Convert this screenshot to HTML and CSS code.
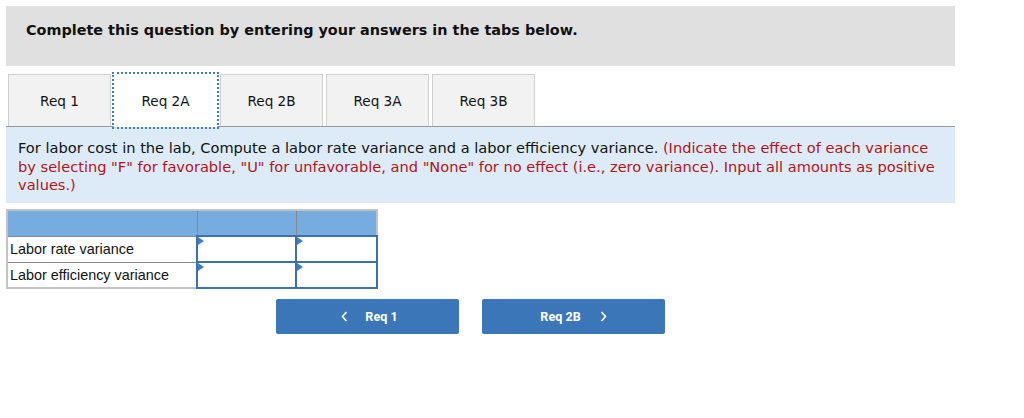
FILE: index.html
```html
<!DOCTYPE html>
<html>
<head>
<meta charset="utf-8">
<link rel="stylesheet" href="styles.css">
</head>
<body>
<div class="page">
  <div class="banner">Complete this question by entering your answers in the tabs below.</div>
  <div class="tabs">
    <div class="tab">Req 1</div>
    <div class="tab active">Req 2A</div>
    <div class="tab">Req 2B</div>
    <div class="tab">Req 3A</div>
    <div class="tab">Req 3B</div>
  </div>
  <div class="info">For labor cost in the lab, Compute a labor rate variance and a labor efficiency variance. <span class="red">(Indicate the effect of each variance by selecting "F" for favorable, "U" for unfavorable, and "None" for no effect (i.e., zero variance). Input all amounts as positive values.)</span></div>
  <table class="grid">
    <tr class="head"><td class="c1"></td><td class="c2"></td><td class="c3"></td></tr>
    <tr><td class="c1 label">Labor rate variance</td><td class="c2 input"><span class="flag"></span></td><td class="c3 input"><span class="flag"></span></td></tr>
    <tr><td class="c1 label">Labor efficiency variance</td><td class="c2 input"><span class="flag"></span></td><td class="c3 input"><span class="flag"></span></td></tr>
  </table>
  <div class="nav">
    <div class="btn prev"><svg class="chev" width="7" height="11" viewBox="0 0 7 11"><path d="M5.5 1 L1.5 5.5 L5.5 10" fill="none" stroke="#fff" stroke-width="1.6"/></svg><span>Req 1</span></div>
    <div class="btn next"><span>Req 2B</span><svg class="chev" width="7" height="11" viewBox="0 0 7 11"><path d="M1.5 1 L5.5 5.5 L1.5 10" fill="none" stroke="#fff" stroke-width="1.6"/></svg></div>
  </div>
</div>
</body>
</html>
```
FILE: styles.css
```css
html, body { margin: 0; padding: 0; background: #fff; }
body { font-family: "DejaVu Sans", Verdana, sans-serif; color: #111; }
.page { padding: 6px 69px 0 6px; }
.banner {
  background: #e0e0e0;
  height: 60px;
  box-sizing: border-box;
  padding: 16px 0 0 20px;
  font-size: 14.4px;
  font-weight: bold;
}
.tabs {
  display: flex;
  gap: 3px;
  margin-top: 8px;
  padding-left: 2px;
  border-bottom: 1px solid #999;
  height: 52px;
}
.tab {
  width: 103px;
  box-sizing: border-box;
  height: 52px;
  background: #f2f2f2;
  border: 1px solid #cfcfcf;
  border-bottom: none;
  display: flex;
  align-items: center;
  justify-content: center;
  font-size: 13.6px;
  color: #111;
}
.tab.active {
  background: #fff;
  border: none;
  outline: 2px dotted #3f7cc4;
  outline-offset: 0px;
  position: relative;
  z-index: 1;
  height: 53px;
}
.info {
  background: #dcebf7;
  padding: 12px 12px 10px 12px;
  font-size: 14.6px;
  line-height: 18.5px;
  height: 76px;
  box-sizing: border-box;
}
.red { color: #b0141a; }
.grid {
  margin-top: 6px;
  border-collapse: collapse;
  border: 2px solid #c3c3c3;
  font-family: "Liberation Sans", Arial, sans-serif;
  font-size: 14.4px;
}
.grid td { padding: 0; height: 24px; border: 1px solid #888; }
.grid .c1 { width: 186px; }
.grid .c2 { width: 97px; }
.grid .c3 { width: 79px; }
.grid .head td { background: #77ace0; height: 24px; }
.grid .label { padding-left: 2px; }
.grid .input { border: 2px solid #3d70b0; position: relative; background: #fff; }
.flag {
  position: absolute; left: 0; top: 0;
  width: 0; height: 0;
  border-top: 4px solid transparent;
  border-bottom: 4px solid transparent;
  border-left: 6px solid #3d7cc9;
}
.nav {
  display: flex;
  gap: 23px;
  margin: 10px 0 0 270px;
}
.btn {
  width: 183px; height: 35px;
  background: #3a76b8;
  border-radius: 2px;
  color: #fff;
  font-family: Roboto, "Liberation Sans", sans-serif;
  font-weight: bold;
  font-size: 12.6px;
  display: flex; align-items: center; justify-content: center;
}
.btn.prev { gap: 17px; padding-left: 4px; box-sizing: border-box; }
.btn.next { gap: 19px; padding-left: 0; box-sizing: border-box; }
.chev { display: block; }
```
